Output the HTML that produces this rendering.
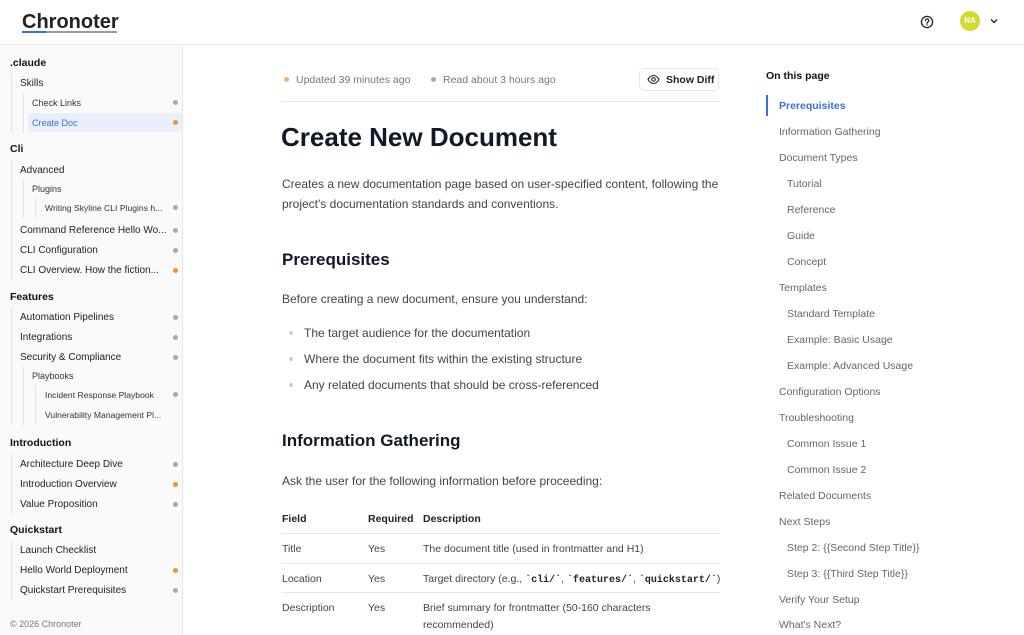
<!DOCTYPE html>
<html><head><meta charset="utf-8"><style>
*{margin:0;padding:0;box-sizing:border-box}
body{width:1024px;height:634px;overflow:hidden;background:#fff;font-family:"Liberation Sans",Arial,sans-serif;position:relative;color:#1f2937}
.t{position:absolute;white-space:nowrap;line-height:20px;height:20px}
.side{position:absolute;left:0;top:45px;width:183px;height:589px;background:#fafafa;border-right:1px solid #e5e7eb}
.hdr{position:absolute;left:0;top:0;width:1024px;height:45px;border-bottom:1px solid #ebebeb;background:#fff;box-shadow:0 1px 3px rgba(0,0,0,.04)}
.s0{font-size:10.5px;font-weight:bold;color:#111;left:10px}
.s1{font-size:10px;color:#222;left:20px}
.s2{font-size:9px;color:#333;left:32px}
.s3{font-size:8.6px;color:#333;left:45px}
.dot{position:absolute;width:5px;height:5px;border-radius:50%;left:173px;background:#aaa}
.o{background:#f0932b}
.vl{position:absolute;width:1px;background:#e3e3e3}
.m{font-size:12px;color:#444}
.toc{font-size:10.5px;color:#666}
.line{position:absolute;height:1px;background:#e5e7eb;left:282px;width:438px}
code{font-family:"Liberation Mono",monospace;font-weight:bold;font-size:10px;color:#222}
</style></head><body>
<div class="hdr"></div>
<div class="t" style="left:22px;top:10px;font-size:20px;font-weight:bold;color:#222;line-height:24px;height:24px">Chronoter</div>
<div style="position:absolute;left:22px;top:31px;width:95px;height:2px;background:#999"></div>
<div style="position:absolute;left:22px;top:31px;width:24px;height:2px;background:#3b6fd8"></div>
<svg style="position:absolute;left:920px;top:15px" width="14" height="14" viewBox="0 0 14 14"><circle cx="7" cy="7" r="5.6" fill="none" stroke="#222" stroke-width="1.3"/><path d="M5.3 5.6a1.7 1.7 0 1 1 2.3 1.6c-.4.2-.6.5-.6.9v.3" fill="none" stroke="#222" stroke-width="1.2" stroke-linecap="round"/><circle cx="7" cy="10" r=".7" fill="#222"/></svg>
<div style="position:absolute;left:960px;top:11px;width:20px;height:20px;border-radius:50%;background:#d4d930;color:#fff;font-size:8px;font-weight:bold;text-align:center;line-height:20px">NA</div>
<svg style="position:absolute;left:989px;top:17px" width="10" height="8" viewBox="0 0 10 8"><path d="M2 2.5l3 3 3-3" fill="none" stroke="#222" stroke-width="1.4"/></svg>

<div class="side"></div>
<div class="vl" style="left:11px;top:73px;height:60px"></div>
<div class="vl" style="left:23px;top:93px;height:40px"></div>
<div class="vl" style="left:11px;top:160px;height:120px"></div>
<div class="vl" style="left:23px;top:180px;height:38px"></div>
<div class="vl" style="left:35px;top:198px;height:20px"></div>
<div class="vl" style="left:11px;top:307px;height:118px"></div>
<div class="vl" style="left:23px;top:367px;height:58px"></div>
<div class="vl" style="left:35px;top:385px;height:40px"></div>
<div class="vl" style="left:11px;top:454px;height:60px"></div>
<div class="vl" style="left:11px;top:540px;height:60px"></div>
<div style="position:absolute;left:28px;top:113px;width:154px;height:19px;background:#e8eefb;border-radius:3px"></div>

<div class="t s0" style="top:53px">.claude</div>
<div class="t s1" style="top:74px">Skills</div>
<div class="t s2" style="top:93px">Check Links</div><div class="dot" style="top:100px"></div>
<div class="t s2" style="top:113px;color:#3b6fd8">Create Doc</div><div class="dot o" style="top:120px"></div>
<div class="t s0" style="top:139px">Cli</div>
<div class="t s1" style="top:161px">Advanced</div>
<div class="t s2" style="top:179px">Plugins</div>
<div class="t s3" style="top:198px">Writing Skyline CLI Plugins h...</div><div class="dot" style="top:205px"></div>
<div class="t s1" style="top:221px">Command Reference Hello Wo...</div><div class="dot" style="top:228px"></div>
<div class="t s1" style="top:241px">CLI Configuration</div><div class="dot" style="top:248px"></div>
<div class="t s1" style="top:261px">CLI Overview. How the fiction...</div><div class="dot o" style="top:268px"></div>
<div class="t s0" style="top:287px">Features</div>
<div class="t s1" style="top:308px">Automation Pipelines</div><div class="dot" style="top:315px"></div>
<div class="t s1" style="top:328px">Integrations</div><div class="dot" style="top:335px"></div>
<div class="t s1" style="top:348px">Security &amp; Compliance</div><div class="dot" style="top:355px"></div>
<div class="t s2" style="top:366px">Playbooks</div>
<div class="t s3" style="top:385px">Incident Response Playbook</div><div class="dot" style="top:392px"></div>
<div class="t s3" style="top:405px">Vulnerability Management Pl...</div>
<div class="t s0" style="top:433px">Introduction</div>
<div class="t s1" style="top:455px">Architecture Deep Dive</div><div class="dot" style="top:462px"></div>
<div class="t s1" style="top:475px">Introduction Overview</div><div class="dot o" style="top:482px"></div>
<div class="t s1" style="top:495px">Value Proposition</div><div class="dot" style="top:502px"></div>
<div class="t s0" style="top:520px">Quickstart</div>
<div class="t s1" style="top:541px">Launch Checklist</div>
<div class="t s1" style="top:561px">Hello World Deployment</div><div class="dot o" style="top:568px"></div>
<div class="t s1" style="top:581px">Quickstart Prerequisites</div><div class="dot" style="top:588px"></div>
<div class="t" style="left:10px;top:614px;font-size:9px;color:#777">© 2026 Chronoter</div>

<!-- main -->
<div style="position:absolute;left:284px;top:77px;width:5px;height:5px;border-radius:50%;background:#f2b36b"></div>
<div class="t" style="left:296px;top:70px;font-size:10.5px;color:#777">Updated 39 minutes ago</div>
<div style="position:absolute;left:431px;top:77px;width:5px;height:5px;border-radius:50%;background:#aaa"></div>
<div class="t" style="left:443px;top:70px;font-size:10.5px;color:#777">Read about 3 hours ago</div>
<div style="position:absolute;left:639px;top:68px;width:80px;height:23px;border:1px solid #e5e7eb;border-radius:5px;background:#fff"></div>
<svg style="position:absolute;left:647px;top:74px" width="13" height="11" viewBox="0 0 13 11"><path d="M1 5.5C2.5 2.8 4.4 1.5 6.5 1.5S10.5 2.8 12 5.5C10.5 8.2 8.6 9.5 6.5 9.5S2.5 8.2 1 5.5z" fill="none" stroke="#222" stroke-width="1.1"/><circle cx="6.5" cy="5.5" r="1.8" fill="none" stroke="#222" stroke-width="1.1"/></svg>
<div class="t" style="left:666px;top:70px;font-size:10.5px;font-weight:bold;color:#222">Show Diff</div>
<div class="line" style="top:101px"></div>
<div class="t" style="left:281px;top:120px;font-size:26px;font-weight:800;color:#111827;line-height:34px;height:34px">Create New Document</div>
<div class="t m" style="left:282px;top:174px">Creates a new documentation page based on user-specified content, following the</div>
<div class="t m" style="left:282px;top:194px">project's documentation standards and conventions.</div>
<div class="t" style="left:282px;top:248px;font-size:17px;font-weight:bold;color:#111827;line-height:24px;height:24px">Prerequisites</div>
<div class="t m" style="left:282px;top:289px">Before creating a new document, ensure you understand:</div>
<div style="position:absolute;left:289px;top:331px;width:4px;height:4px;border-radius:50%;background:#ccc"></div>
<div class="t m" style="left:304px;top:323px">The target audience for the documentation</div>
<div style="position:absolute;left:289px;top:357px;width:4px;height:4px;border-radius:50%;background:#ccc"></div>
<div class="t m" style="left:304px;top:349px">Where the document fits within the existing structure</div>
<div style="position:absolute;left:289px;top:383px;width:4px;height:4px;border-radius:50%;background:#ccc"></div>
<div class="t m" style="left:304px;top:375px">Any related documents that should be cross-referenced</div>
<div class="t" style="left:282px;top:429px;font-size:17px;font-weight:bold;color:#111827;line-height:24px;height:24px">Information Gathering</div>
<div class="t m" style="left:282px;top:471px">Ask the user for the following information before proceeding:</div>
<div class="t" style="left:282px;top:509px;font-size:10.5px;font-weight:bold;color:#222">Field</div>
<div class="t" style="left:368px;top:509px;font-size:10.5px;font-weight:bold;color:#222">Required</div>
<div class="t" style="left:423px;top:509px;font-size:10.5px;font-weight:bold;color:#222">Description</div>
<div class="line" style="top:533px"></div>
<div class="t" style="left:282px;top:539px;font-size:10.5px;color:#444">Title</div>
<div class="t" style="left:368px;top:539px;font-size:10.5px;color:#444">Yes</div>
<div class="t" style="left:423px;top:539px;font-size:10.5px;color:#444">The document title (used in frontmatter and H1)</div>
<div class="line" style="top:563px"></div>
<div class="t" style="left:282px;top:569px;font-size:10.5px;color:#444">Location</div>
<div class="t" style="left:368px;top:569px;font-size:10.5px;color:#444">Yes</div>
<div class="t" style="left:423px;top:569px;font-size:10.5px;color:#444">Target directory (e.g., <code>`cli/`</code>, <code>`features/`</code>, <code>`quickstart/`</code>)</div>
<div class="line" style="top:592px"></div>
<div class="t" style="left:282px;top:598px;font-size:10.5px;color:#444">Description</div>
<div class="t" style="left:368px;top:598px;font-size:10.5px;color:#444">Yes</div>
<div class="t" style="left:423px;top:598px;font-size:10.5px;color:#444">Brief summary for frontmatter (50-160 characters</div>
<div class="t" style="left:423px;top:615px;font-size:10.5px;color:#444">recommended)</div>

<!-- toc -->
<div class="t" style="left:766px;top:66px;font-size:10.5px;font-weight:bold;color:#111">On this page</div>
<div style="position:absolute;left:766px;top:95px;width:2px;height:21px;background:#3b6fd8"></div>
<div class="t toc" style="left:779px;top:96px;color:#3b6fd8;font-weight:bold">Prerequisites</div>
<div class="t toc" style="left:779px;top:122px">Information Gathering</div>
<div class="t toc" style="left:779px;top:148px">Document Types</div>
<div class="t toc" style="left:787px;top:174px">Tutorial</div>
<div class="t toc" style="left:787px;top:200px">Reference</div>
<div class="t toc" style="left:787px;top:226px">Guide</div>
<div class="t toc" style="left:787px;top:252px">Concept</div>
<div class="t toc" style="left:779px;top:278px">Templates</div>
<div class="t toc" style="left:787px;top:304px">Standard Template</div>
<div class="t toc" style="left:787px;top:330px">Example: Basic Usage</div>
<div class="t toc" style="left:787px;top:356px">Example: Advanced Usage</div>
<div class="t toc" style="left:779px;top:382px">Configuration Options</div>
<div class="t toc" style="left:779px;top:408px">Troubleshooting</div>
<div class="t toc" style="left:787px;top:434px">Common Issue 1</div>
<div class="t toc" style="left:787px;top:460px">Common Issue 2</div>
<div class="t toc" style="left:779px;top:486px">Related Documents</div>
<div class="t toc" style="left:779px;top:512px">Next Steps</div>
<div class="t toc" style="left:787px;top:538px">Step 2: {{Second Step Title}}</div>
<div class="t toc" style="left:787px;top:564px">Step 3: {{Third Step Title}}</div>
<div class="t toc" style="left:779px;top:590px">Verify Your Setup</div>
<div class="t toc" style="left:779px;top:615px">What's Next?</div>
</body></html>
